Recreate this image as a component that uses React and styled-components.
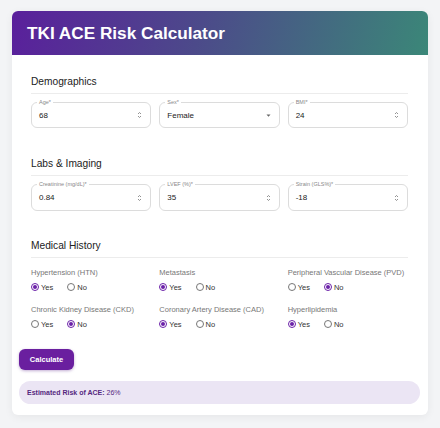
import React, { useState } from 'react'
import styled, { createGlobalStyle } from 'styled-components'

const GlobalStyle = createGlobalStyle`
  html, body {
    margin: 0;
    padding: 0;
    background: #f3f4f6;
    font-family: "Liberation Sans", Arial, sans-serif;
  }
`

const Page = styled.div`
  padding: 11px 12px 13px 12px;
`

const Card = styled.div`
  background: #ffffff;
  border-radius: 6px;
  box-shadow: 0 2px 8px rgba(0, 0, 0, 0.06);
  overflow: hidden;
`

const Header = styled.div`
  height: 44px;
  display: flex;
  align-items: center;
  padding-left: 15px;
  background: linear-gradient(105deg, #5a1f9c 0%, #4c4a8a 45%, #3b8778 100%);
`

const Title = styled.h1`
  margin: 0;
  color: #ffffff;
  font-size: 17.2px;
  font-weight: 700;
`

const Body = styled.div`
  padding: 20px 8px 11px 7px;
`

const Form = styled.div`
  padding: 0 12px;
`

const Section = styled.div`
  margin-bottom: ${p => p.$gap || 0}px;
`

const SectionTitle = styled.div`
  font-size: 10.2px;
  line-height: 14px;
  font-weight: 500;
  color: #222;
  padding-bottom: 4px;
  border-bottom: 1px solid #ececec;
`

const Grid = styled.div`
  display: grid;
  grid-template-columns: repeat(3, 1fr);
  column-gap: 8px;
  margin-top: ${p => p.$top || 8}px;
`

const Field = styled.div`
  position: relative;
  height: ${p => p.$h || 26}px;
  border: 1px solid #dcdcdc;
  border-radius: 6px;
  box-sizing: border-box;
  display: flex;
  align-items: center;
  justify-content: space-between;
  padding: 0 8px 0 7px;
`

const FieldLabel = styled.span`
  position: absolute;
  top: -4px;
  left: 5px;
  padding: 0 2px;
  background: #fff;
  font-size: 5.5px;
  line-height: 7px;
  color: #888;
`

const Value = styled.span`
  font-size: 8px;
  color: #222;
`

const Spinner = () => (
  <svg width="5" height="8" viewBox="0 0 5 8">
    <path d="M1 3 L2.5 1.5 L4 3 M1 5 L2.5 6.5 L4 5" fill="none" stroke="#777" strokeWidth="0.8" />
  </svg>
)

const Caret = () => (
  <svg width="5" height="3" viewBox="0 0 5 3">
    <path d="M0.5 0.5 L4.5 0.5 L2.5 2.8 Z" fill="#666" />
  </svg>
)

const HistoryGrid = styled.div`
  display: grid;
  grid-template-columns: repeat(3, 1fr);
  column-gap: 8px;
  row-gap: 13px;
  margin-top: 10px;
`

const Question = styled.div`
  display: flex;
  flex-direction: column;
  gap: 4px;
`

const QuestionLabel = styled.div`
  font-size: 7.5px;
  line-height: 10px;
  color: #777;
`

const Options = styled.div`
  display: flex;
  align-items: center;
  gap: 14px;
  height: 10px;
`

const Option = styled.label`
  display: flex;
  align-items: center;
  gap: 2px;
  font-size: 7.5px;
  color: #333;
  cursor: pointer;
`

const Circle = styled.span`
  width: 8px;
  height: 8px;
  box-sizing: border-box;
  border-radius: 50%;
  border: 1px solid ${p => (p.$on ? '#6b21a8' : '#777')};
  display: flex;
  align-items: center;
  justify-content: center;
  &::after {
    content: '';
    width: 4px;
    height: 4px;
    border-radius: 50%;
    background: ${p => (p.$on ? '#6b21a8' : 'transparent')};
  }
`

const Button = styled.button`
  margin-top: 20px;
  width: 55px;
  height: 21px;
  border: none;
  border-radius: 6px;
  background: #6a1f9f;
  color: #fff;
  font-family: inherit;
  font-size: 7.5px;
  font-weight: 700;
  box-shadow: 0 1px 3px rgba(80, 20, 130, 0.35);
  cursor: pointer;
`

const Result = styled.div`
  margin-top: 11px;
  height: 23px;
  border-radius: 12px;
  background: #ebe5f4;
  display: flex;
  align-items: center;
  padding-left: 8px;
  font-size: 7px;
  color: #55287f;
`

const history = [
  { label: 'Hypertension (HTN)', value: 'Yes' },
  { label: 'Metastasis', value: 'Yes' },
  { label: 'Peripheral Vascular Disease (PVD)', value: 'No' },
  { label: 'Chronic Kidney Disease (CKD)', value: 'No' },
  { label: 'Coronary Artery Disease (CAD)', value: 'Yes' },
  { label: 'Hyperlipidemia', value: 'Yes' },
]

export default function App() {
  const [answers, setAnswers] = useState(history.map(h => h.value))

  const pick = (i, v) => {
    const next = [...answers]
    next[i] = v
    setAnswers(next)
  }

  return (
    <>
      <GlobalStyle />
      <Page>
        <Card>
          <Header>
            <Title>TKI ACE Risk Calculator</Title>
          </Header>
          <Body>
            <Form>
              <Section $gap={29}>
                <SectionTitle>Demographics</SectionTitle>
                <Grid>
                  <Field>
                    <FieldLabel>Age*</FieldLabel>
                    <Value>68</Value>
                    <Spinner />
                  </Field>
                  <Field>
                    <FieldLabel>Sex*</FieldLabel>
                    <Value>Female</Value>
                    <Caret />
                  </Field>
                  <Field>
                    <FieldLabel>BMI*</FieldLabel>
                    <Value>24</Value>
                    <Spinner />
                  </Field>
                </Grid>
              </Section>
              <Section $gap={28}>
                <SectionTitle>Labs &amp; Imaging</SectionTitle>
                <Grid>
                  <Field $h={27}>
                    <FieldLabel>Creatinine (mg/dL)*</FieldLabel>
                    <Value>0.84</Value>
                    <Spinner />
                  </Field>
                  <Field $h={27}>
                    <FieldLabel>LVEF (%)*</FieldLabel>
                    <Value>35</Value>
                    <Spinner />
                  </Field>
                  <Field $h={27}>
                    <FieldLabel>Strain (GLS%)*</FieldLabel>
                    <Value>-18</Value>
                    <Spinner />
                  </Field>
                </Grid>
              </Section>
              <Section>
                <SectionTitle>Medical History</SectionTitle>
                <HistoryGrid>
                  {history.map((h, i) => (
                    <Question key={h.label}>
                      <QuestionLabel>{h.label}</QuestionLabel>
                      <Options>
                        {['Yes', 'No'].map(v => (
                          <Option key={v} onClick={() => pick(i, v)}>
                            <Circle $on={answers[i] === v} />
                            {v}
                          </Option>
                        ))}
                      </Options>
                    </Question>
                  ))}
                </HistoryGrid>
              </Section>
            </Form>
            <Button>Calculate</Button>
            <Result>
              <b>Estimated Risk of ACE:</b>&nbsp;26%
            </Result>
          </Body>
        </Card>
      </Page>
    </>
  )
}
